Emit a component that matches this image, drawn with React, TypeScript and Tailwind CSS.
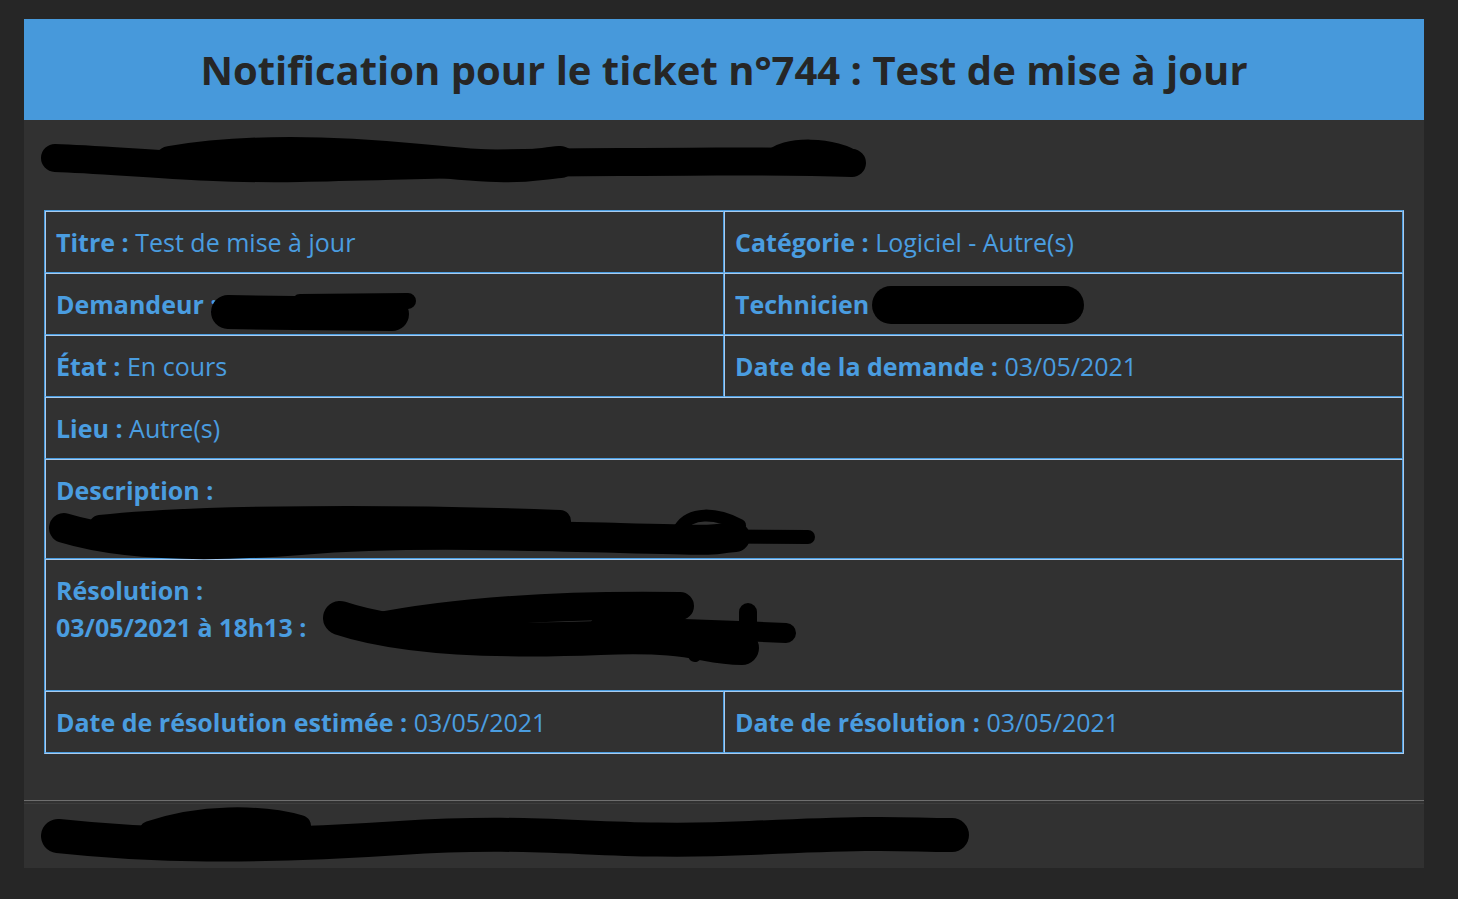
import React from 'react'

const font = { fontFamily: '"Open Sans", Lato, sans-serif' }

// traits noirs de caviardage, en coordonnées page (décalées de l'origine du cadre)
function Redactions() {
  return (
    <svg
      className="pointer-events-none absolute inset-0"
      width={1400}
      height={849}
      viewBox="0 0 1400 849"
    >
      <g transform="translate(-24 -19)" fill="none" stroke="#000" strokeLinecap="round" strokeLinejoin="round">
        {/* ligne d'intro */}
        <path d="M 55 158 C 120 160, 200 170, 300 168 S 500 162, 620 162 S 780 160, 852 163" strokeWidth={28} />
        <path d="M 170 162 C 240 150, 320 150, 420 160 S 520 166, 560 162" strokeWidth={32} />
        <path d="M 770 160 C 782 142, 838 145, 856 160" strokeWidth={16} />
        {/* demandeur */}
        <path d="M 228 312 C 280 313, 350 314, 392 314" strokeWidth={34} />
        <path d="M 300 302 L 408 301" strokeWidth={16} />
        {/* technicien */}
        <path d="M 891 305 L 1065 305" strokeWidth={38} />
        {/* description */}
        <path d="M 64 528 C 120 545, 200 548, 300 540 S 500 535, 620 538 S 700 540, 735 537" strokeWidth={30} />
        <path d="M 100 526 C 200 515, 400 515, 560 521" strokeWidth={22} />
        <path d="M 640 536 L 808 537" strokeWidth={14} />
        <path d="M 680 528 C 690 512, 715 512, 740 525" strokeWidth={12} />
        {/* résolution */}
        <path d="M 340 618 C 400 638, 500 642, 600 638 S 700 648, 742 648" strokeWidth={34} />
        <path d="M 370 628 C 450 612, 550 604, 680 606" strokeWidth={28} />
        <path d="M 600 626 C 650 628, 720 630, 786 633" strokeWidth={20} />
        <path d="M 748 612 L 748 645" strokeWidth={18} />
        <path d="M 690 640 L 695 655" strokeWidth={14} />
        {/* pied */}
        <path d="M 58 836 C 150 846, 250 848, 400 838 S 600 845, 750 838 S 900 835, 952 835" strokeWidth={34} />
        <path d="M 150 832 C 200 815, 260 815, 300 826" strokeWidth={22} />
      </g>
    </svg>
  )
}

function Cell({
  label,
  value,
  colSpan,
  children,
}: {
  label: string
  value?: string
  colSpan?: number
  children?: React.ReactNode
}) {
  return (
    <td
      colSpan={colSpan}
      className="border border-t-[#a9cbee] border-l-[#a9cbee] border-r-[#4a9de0] border-b-[#4a9de0] px-[10px] pt-[12px] align-top"
    >
      <span className="font-bold">{label}</span>
      {value && <span> {value}</span>}
      {children}
    </td>
  )
}

export default function App() {
  return (
    <div className="min-h-[899px] bg-[#262626] pt-[19px] pl-[24px]" style={font}>
      <div className="relative w-[1400px] h-[849px] bg-[#313131] flex flex-col">
        <div className="h-[101px] bg-[#4799db] flex items-center justify-center">
          <h1 className="text-[40px] font-bold text-[#262626] leading-none">
            Notification pour le ticket n°744 : Test de mise à jour
          </h1>
        </div>

        <div className="px-[20px]">
          <div className="h-[90px]" />
          <table className="w-full table-fixed border-separate border-spacing-0 border border-t-[#4a9de0] border-l-[#4a9de0] border-r-[#a9cbee] border-b-[#a9cbee] text-[25px] leading-[37px] text-[#4a9de0]">
            <colgroup>
              <col className="w-1/2" />
              <col className="w-1/2" />
            </colgroup>
            <tbody>
              <tr className="h-[62px]">
                <Cell label="Titre :" value="Test de mise à jour" />
                <Cell label="Catégorie :" value="Logiciel - Autre(s)" />
              </tr>
              <tr className="h-[62px]">
                <Cell label="Demandeur :" />
                <Cell label="Technicien :" />
              </tr>
              <tr className="h-[62px]">
                <Cell label="État :" value="En cours" />
                <Cell label="Date de la demande :" value="03/05/2021" />
              </tr>
              <tr className="h-[62px]">
                <Cell label="Lieu :" value="Autre(s)" colSpan={2} />
              </tr>
              <tr className="h-[100px]">
                <Cell label="Description :" colSpan={2} />
              </tr>
              <tr className="h-[132px]">
                <Cell label="Résolution :" colSpan={2}>
                  <div className="font-bold">03/05/2021 à 18h13 :</div>
                </Cell>
              </tr>
              <tr className="h-[62px]">
                <Cell label="Date de résolution estimée :" value="03/05/2021" />
                <Cell label="Date de résolution :" value="03/05/2021" />
              </tr>
            </tbody>
          </table>
        </div>

        <div className="mt-[46px] border-t border-[#6e6e6e]" />
        <div className="mt-[2px] border-t border-[#3c3c3c]" />

        <Redactions />
      </div>
    </div>
  )
}
